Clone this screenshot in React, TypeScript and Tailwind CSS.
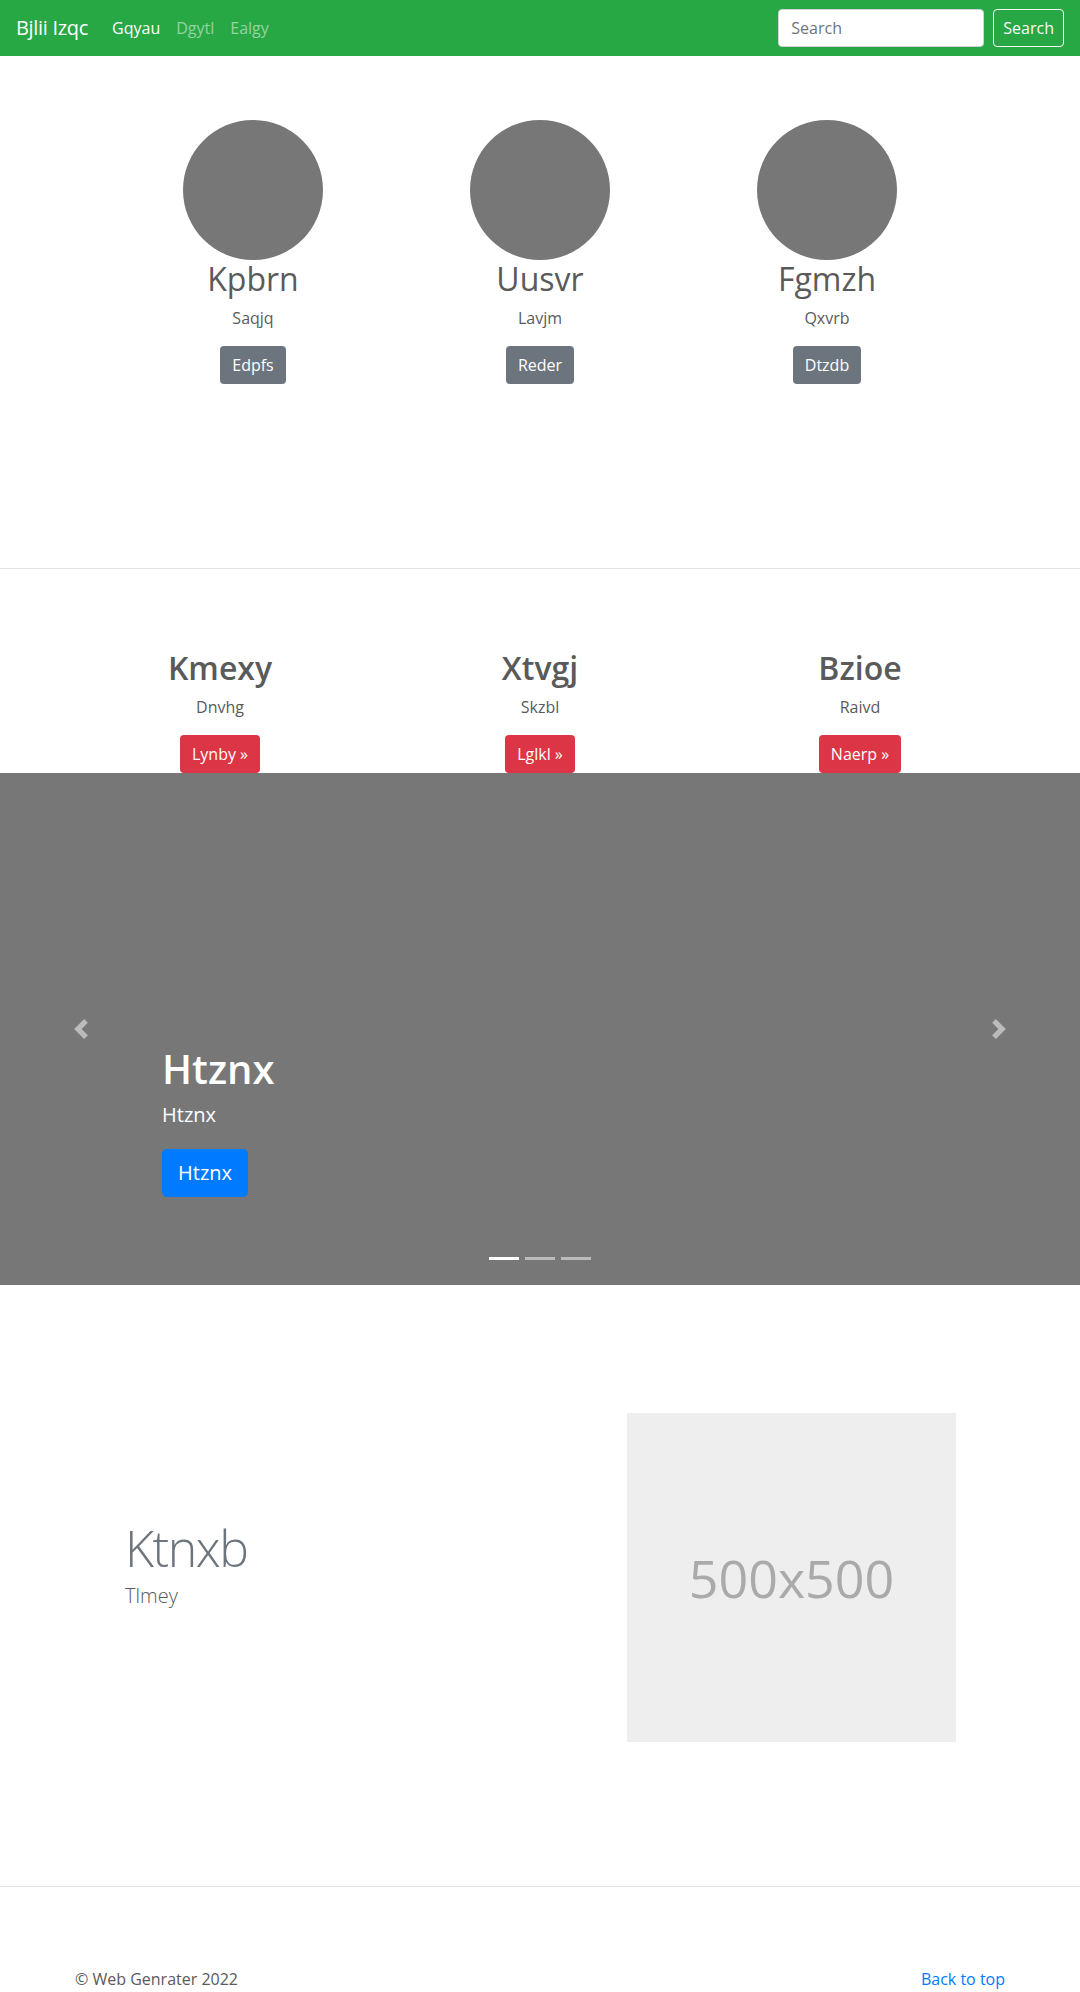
import React from 'react';

const font = { fontFamily: '"Open Sans", "Noto Sans", sans-serif' };

const people = [
    { name: 'Kpbrn', sub: 'Saqjq', btn: 'Edpfs' },
    { name: 'Uusvr', sub: 'Lavjm', btn: 'Reder' },
    { name: 'Fgmzh', sub: 'Qxvrb', btn: 'Dtzdb' },
];

const features = [
    { name: 'Kmexy', sub: 'Dnvhg', btn: 'Lynby »' },
    { name: 'Xtvgj', sub: 'Skzbl', btn: 'Lglkl »' },
    { name: 'Bzioe', sub: 'Raivd', btn: 'Naerp »' },
];

function Navbar() {
    return (
        <nav className="flex h-14 items-center bg-[#28a745] px-4">
            <a className="mr-4 text-[20px] leading-[30px] tracking-[-0.3px] text-white">Bjlii Izqc</a>
            <ul className="flex flex-1 items-center text-[16px] leading-6">
                <li className="px-2 text-white">Gqyau</li>
                <li className="px-2 text-white/50">Dgytl</li>
                <li className="px-2 text-white/50">Ealgy</li>
            </ul>
            <form className="flex items-center gap-[9px]">
                <input
                    className="h-[38px] w-[206px] rounded border border-[#ced4da] bg-white px-3 text-[16px] text-[#495057] placeholder:text-[#6c757d]"
                    placeholder="Search"
                    style={font}
                />
                <button className="h-[38px] rounded border border-[#f8f9fa] px-[9px] text-[16px] text-[#f8f9fa]">
                    Search
                </button>
            </form>
        </nav>
    );
}

function ChevronLeft() {
    return (
        <svg width="20" height="20" viewBox="0 0 8 8" fill="#fff">
            <path d="M5.25 0l-4 4 4 4 1.5-1.5L4.25 4l2.5-2.5L5.25 0z" />
        </svg>
    );
}

function ChevronRight() {
    return (
        <svg width="20" height="20" viewBox="0 0 8 8" fill="#fff">
            <path d="M2.75 0l-1.5 1.5L3.75 4l-2.5 2.5L2.75 8l4-4-4-4z" />
        </svg>
    );
}

function Carousel() {
    return (
        <div className="relative h-[512px] bg-[#777]">
            <div className="absolute inset-y-0 left-0 flex w-[15%] items-center justify-center opacity-50">
                <ChevronLeft />
            </div>
            <div className="absolute inset-y-0 right-0 flex w-[15%] items-center justify-center opacity-50">
                <ChevronRight />
            </div>
            <div className="absolute bottom-12 left-[15%] right-[15%] pb-5 text-left text-white">
                <h1 className="mb-2 text-[40px] font-semibold leading-[1.2]">Htznx</h1>
                <p className="mb-5 text-[20px] leading-[1.4]">Htznx</p>
                <p className="mb-5">
                    <a className="inline-block rounded-[5px] bg-[#007bff] px-4 py-2 text-[20px] leading-[1.6] text-white">
                        Htznx
                    </a>
                </p>
            </div>
            <ol className="absolute bottom-[15px] left-0 right-0 flex justify-center">
                <li className="mx-[3px] my-[10px] h-[3px] w-[30px] bg-white" />
                <li className="mx-[3px] my-[10px] h-[3px] w-[30px] bg-white/50" />
                <li className="mx-[3px] my-[10px] h-[3px] w-[30px] bg-white/50" />
            </ol>
        </div>
    );
}

export default function App() {
    return (
        <div className="h-[1992px] overflow-hidden bg-white text-[16px] leading-6 text-[#5a5a5a]" style={font}>
            <Navbar />

            <section className="h-[512px] pt-16">
                <div className="mx-auto grid w-[861px] grid-cols-3">
                    {people.map((p) => (
                        <div key={p.name} className="flex flex-col items-center text-center">
                            <div className="h-[140px] w-[140px] rounded-full bg-[#777]" />
                            <h2 className="mb-2 text-[32px] font-normal leading-[1.2]">{p.name}</h2>
                            <p className="mb-4">{p.sub}</p>
                            <a className="rounded bg-[#6c757d] px-3 py-[7px] text-white">{p.btn}</a>
                        </div>
                    ))}
                </div>
            </section>

            <hr className="border-0 border-t border-black/10" />

            <section className="pt-[80px]">
                <div className="mx-auto grid w-[960px] grid-cols-3">
                    {features.map((f) => (
                        <div key={f.name} className="flex flex-col items-center text-center">
                            <h2 className="mb-2 text-[32px] font-semibold leading-[1.2]">{f.name}</h2>
                            <p className="mb-4">{f.sub}</p>
                            <a className="rounded bg-[#dc3545] px-3 py-[7px] text-white">{f.btn}</a>
                        </div>
                    ))}
                </div>
            </section>

            <Carousel />

            <section className="flex h-[601px] items-start justify-between pl-[125px] pr-[124px] pt-[128px]">
                <div className="mt-[110px]">
                    <h2 className="mb-2 text-[50px] font-light leading-none tracking-[-1.5px] text-[#6c757d]">
                        Ktnxb
                    </h2>
                    <p className="text-[20px] font-light leading-[1.5]">Tlmey</p>
                </div>
                <div className="flex h-[329px] w-[329px] items-center justify-center bg-[#eee]">
                    <span className="text-[52px] text-[#aaa]">500x500</span>
                </div>
            </section>

            <hr className="border-0 border-t border-black/10" />

            <footer className="mx-auto flex w-[930px] justify-between pt-[80px]">
                <p>© Web Genrater 2022</p>
                <a className="text-[#007bff]">Back to top</a>
            </footer>
        </div>
    );
}
